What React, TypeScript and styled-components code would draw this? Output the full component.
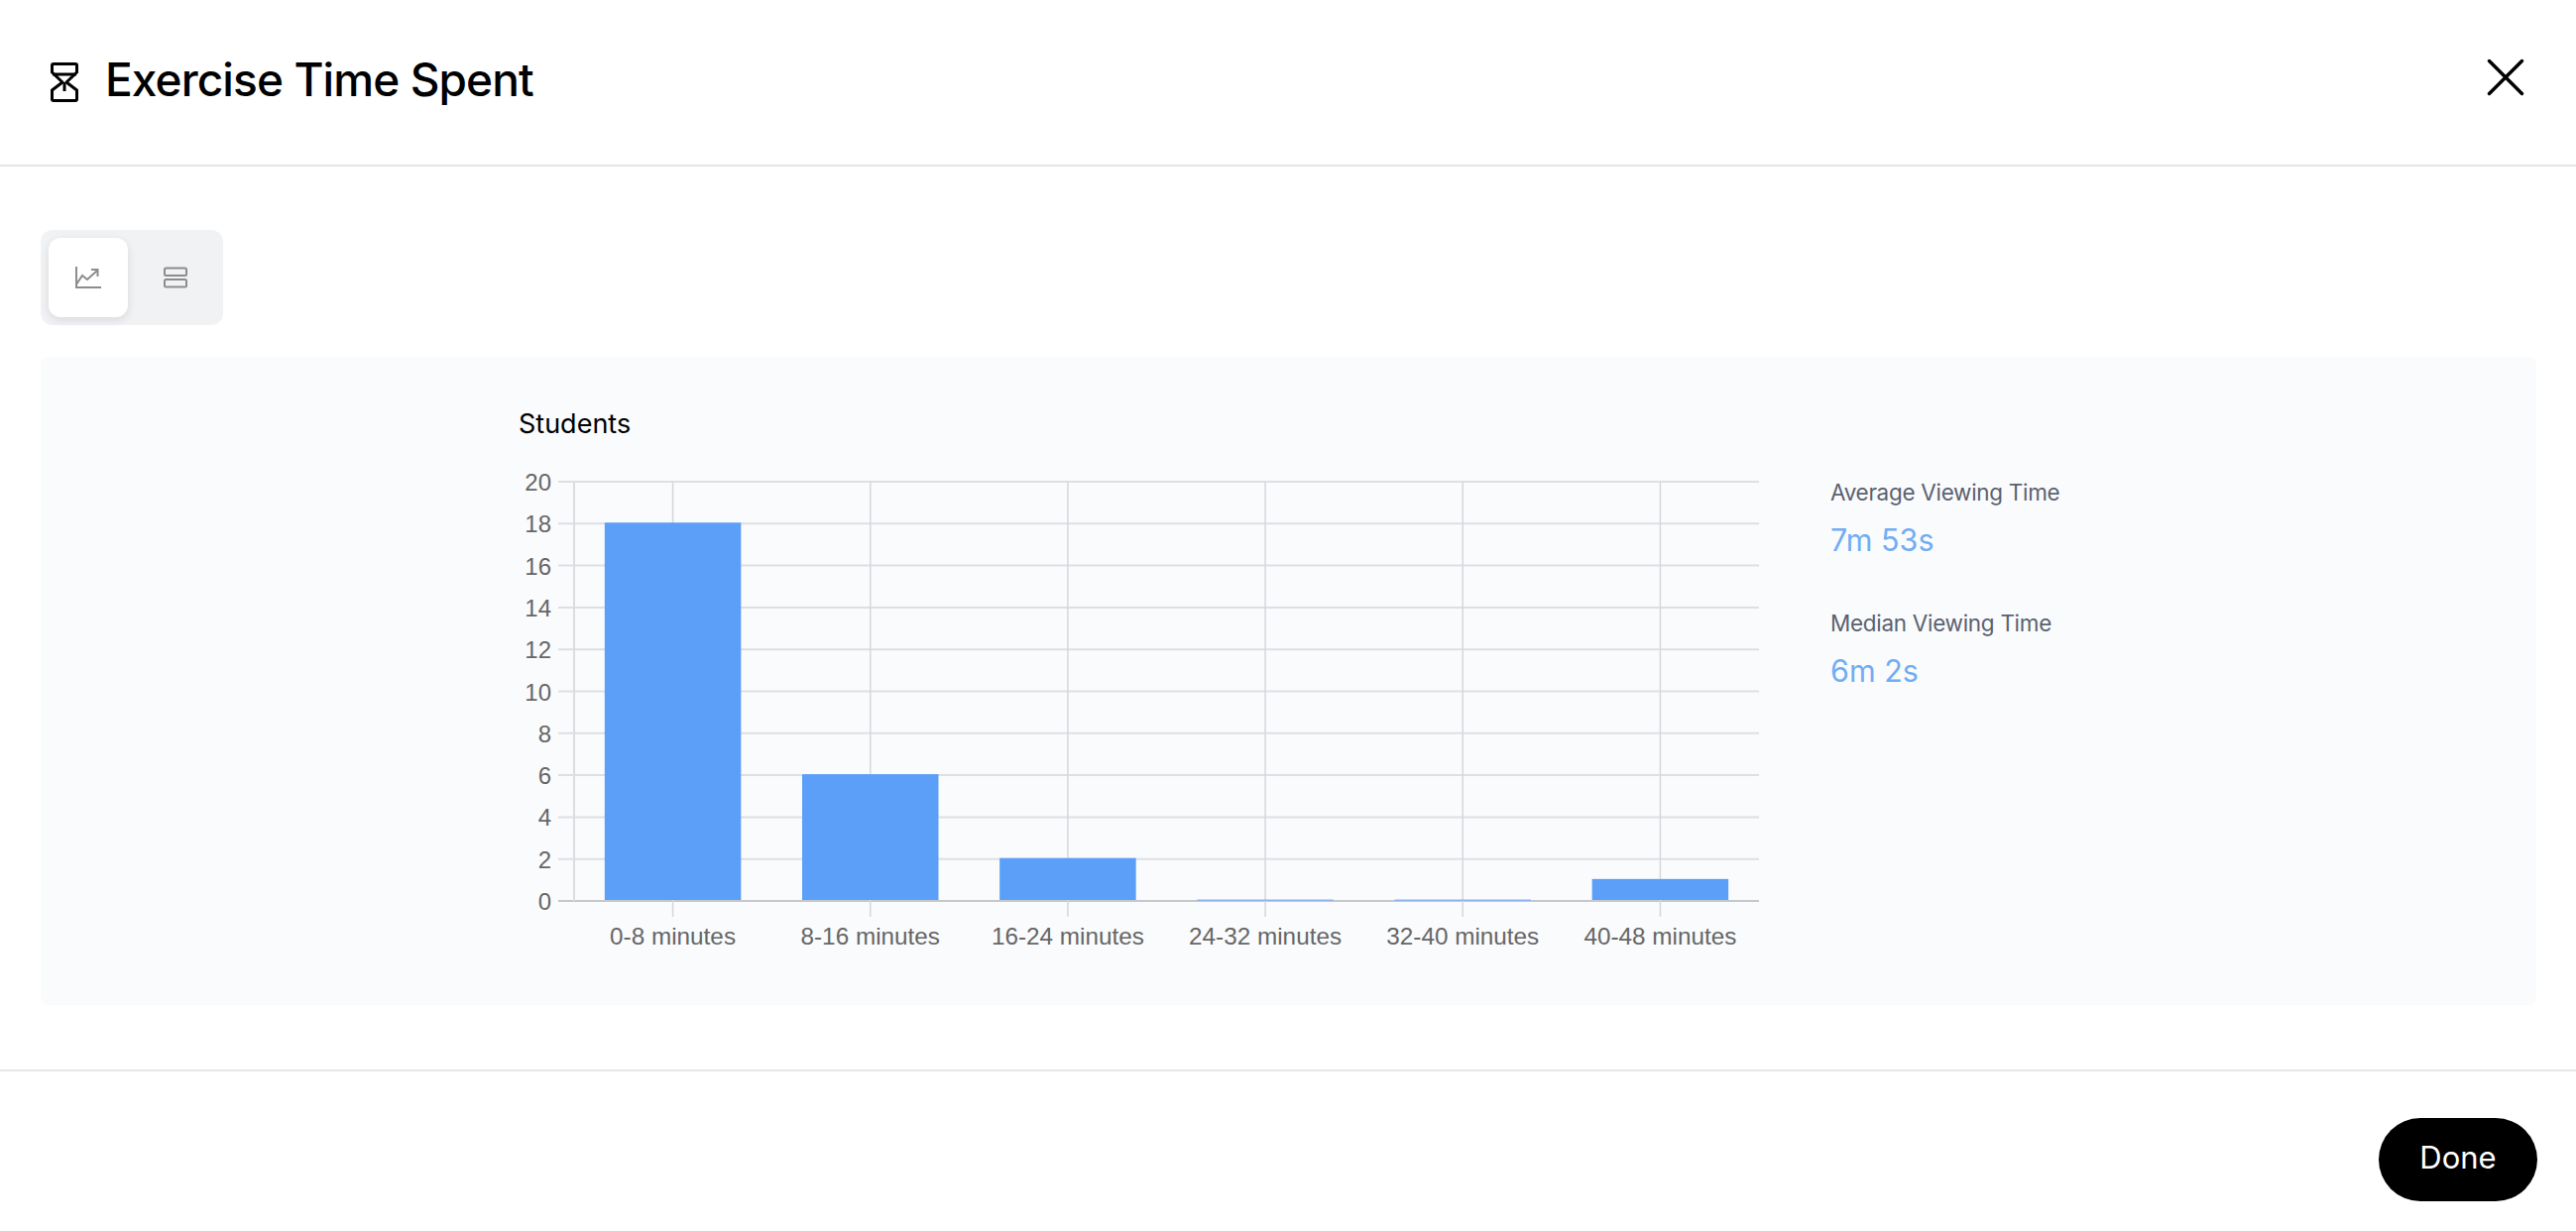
import styled, { createGlobalStyle } from "styled-components";

const GlobalStyle = createGlobalStyle`
  * {
    box-sizing: border-box;
  }
  html, body {
    margin: 0;
    padding: 0;
    background: #ffffff;
    font-family: "Inter", "Liberation Sans", sans-serif;
  }
`;

const Page = styled.div`
  width: 2598px;
  height: 1242px;
  display: flex;
  flex-direction: column;
  background: #ffffff;
  overflow: hidden;
`;

const Header = styled.header`
  height: 168px;
  flex: none;
  padding: 0 51px 0 50px;
  display: flex;
  align-items: center;
  justify-content: space-between;
  border-bottom: 2px solid #e6e6eb;
`;

const TitleGroup = styled.div`
  display: flex;
  align-items: center;
  gap: 26px;
`;

const Title = styled.h1`
  margin: 0 0 6px;
  font-size: 46px;
  line-height: 56px;
  font-weight: 500;
  letter-spacing: -0.9px;
  color: #000000;
`;

const CloseButton = styled.button`
  width: 40px;
  height: 40px;
  padding: 0;
  margin-bottom: 10px;
  border: 0;
  background: none;
  display: flex;
`;

const Main = styled.main`
  flex: 1;
  padding: 64px 40px 65px 41px;
  display: flex;
  flex-direction: column;
  gap: 32px;
`;

const Toggle = styled.div`
  width: 184px;
  height: 96px;
  flex: none;
  padding: 8px;
  display: flex;
  gap: 8px;
  border-radius: 12px;
  background: #f1f2f4;
`;

const ToggleButton = styled.button<{ $active?: boolean }>`
  width: 80px;
  height: 80px;
  padding: 0;
  border: 0;
  border-radius: 12px;
  display: flex;
  align-items: center;
  justify-content: center;
  background: ${(p) => (p.$active ? "#ffffff" : "transparent")};
  box-shadow: ${(p) => (p.$active ? "0 3px 8px rgba(40, 45, 60, 0.12)" : "none")};
`;

const Panel = styled.section`
  flex: 1;
  padding: 50px 0 0 482px;
  display: flex;
  gap: 72px;
  border-radius: 8px;
  background: #fafbfd;
`;

const ChartColumn = styled.div`
  width: 1251px;
  display: flex;
  flex-direction: column;
`;

const ChartTitle = styled.div`
  font-size: 27px;
  line-height: 36px;
  color: #000000;
  margin-bottom: 20px;
`;

const Stats = styled.div`
  padding-top: 72px;
  display: flex;
  flex-direction: column;
  gap: 51px;
`;

const Stat = styled.div`
  display: flex;
  flex-direction: column;
  gap: 15px;
`;

const StatLabel = styled.div`
  font-size: 22.5px;
  line-height: 30px;
  letter-spacing: -0.3px;
  color: #5a6270;
`;

const StatValue = styled.div`
  font-size: 30.5px;
  line-height: 36px;
  color: #72adf4;
`;

const Footer = styled.footer`
  height: 163px;
  flex: none;
  padding: 47px 39px 0 0;
  display: flex;
  justify-content: flex-end;
  align-items: flex-start;
  border-top: 2px solid #e6e6eb;
`;

const DoneButton = styled.button`
  width: 160px;
  height: 84px;
  padding: 0 0 6px;
  border: 0;
  border-radius: 42px;
  background: #000000;
  color: #ffffff;
  font-family: inherit;
  font-size: 31px;
  font-weight: 400;
`;

const HourglassIcon = () => (
  <svg width="30" height="44" viewBox="0 0 30 44" fill="none" stroke="#000" strokeWidth="3" strokeLinejoin="round">
    <path d="M4 3.5h22a1.5 1.5 0 0 1 1.5 1.5v7L17 22l10.5 8v9a1.5 1.5 0 0 1-1.5 1.5H4A1.5 1.5 0 0 1 2.5 39v-9L13 22 2.5 12V5A1.5 1.5 0 0 1 4 3.5z" />
    <path d="M3 14h24M15 22v9" />
  </svg>
);

const CloseIcon = () => (
  <svg width="40" height="40" viewBox="0 0 40 40" fill="none" stroke="#000" strokeWidth="3.4" strokeLinecap="round">
    <path d="M3.5 3.5l33 33M36.5 3.5l-33 33" />
  </svg>
);

const TrendIcon = () => (
  <svg width="28" height="24" viewBox="0 0 28 24" fill="none" stroke="#8c8c8c" strokeWidth="2">
    <path d="M2 1v21h25" />
    <path d="M2 19l6-9 5 4 10-9" />
    <path d="M17 4h6.500v7" />
  </svg>
);

const RowsIcon = () => (
  <svg width="26" height="22" viewBox="0 0 26 22" fill="none" stroke="#8c8c8c" strokeWidth="2">
    <rect x="2" y="1.500" width="22" height="7.500" rx="1.500" />
    <rect x="2" y="13" width="22" height="7.500" rx="1.500" />
  </svg>
);

const categories = [
  { label: "0-8 minutes", value: 18 },
  { label: "8-16 minutes", value: 6 },
  { label: "16-24 minutes", value: 2 },
  { label: "24-32 minutes", value: 0 },
  { label: "32-40 minutes", value: 0 },
  { label: "40-48 minutes", value: 1 },
];

const yTicks = [20, 18, 16, 14, 12, 10, 8, 6, 4, 2, 0];

// chart area in svg units, origin is the top left of the chart column
const LEFT = 56;
const RIGHT = 1251;
const TOP = 20;
const BOTTOM = 443;
const BAND = (RIGHT - LEFT) / categories.length;
const BAR = 137.5;

const yFor = (v: number) => BOTTOM - ((BOTTOM - TOP) * v) / 20;

const BarChart = () => (
  <svg width="1251" height="502" viewBox="0 0 1251 502">
    {yTicks.map((t) => (
      <g key={t}>
        <line x1={40} x2={RIGHT} y1={yFor(t)} y2={yFor(t)} stroke={t === 0 ? "#c6c7ca" : "#dedfe3"} strokeWidth="2" />
        <text x={33} y={yFor(t) + 9} textAnchor="end" fontFamily="Liberation Sans" fontSize="24" fill="#666666">
          {t}
        </text>
      </g>
    ))}
    <line x1={LEFT} x2={LEFT} y1={TOP} y2={BOTTOM} stroke="#dcdde1" strokeWidth="2" />
    {categories.map((c, i) => {
      const mid = LEFT + BAND * (i + 0.5);
      const top = yFor(c.value);
      return (
        <g key={c.label}>
          <line x1={mid} x2={mid} y1={TOP} y2={BOTTOM + 16} stroke="#d6d7db" strokeWidth="1.500" />
          {c.value > 0 ? (
            <rect x={mid - BAR / 2} y={top - 1} width={BAR} height={BOTTOM - top} fill="#5c9ff8" />
          ) : (
            <rect x={mid - BAR / 2} y={BOTTOM - 1.5} width={BAR} height={1.5} fill="#8fb5ea" />
          )}
          <text x={mid} y={BOTTOM + 44} textAnchor="middle" fontFamily="Liberation Sans" fontSize="24.300" fill="#666666">
            {c.label}
          </text>
        </g>
      );
    })}
  </svg>
);

const App = () => {
  return (
    <Page>
      <GlobalStyle />
      <Header>
        <TitleGroup>
          <HourglassIcon />
          <Title>Exercise Time Spent</Title>
        </TitleGroup>
        <CloseButton>
          <CloseIcon />
        </CloseButton>
      </Header>
      <Main>
        <Toggle>
          <ToggleButton $active>
            <TrendIcon />
          </ToggleButton>
          <ToggleButton>
            <RowsIcon />
          </ToggleButton>
        </Toggle>
        <Panel>
          <ChartColumn>
            <ChartTitle>Students</ChartTitle>
            <BarChart />
          </ChartColumn>
          <Stats>
            <Stat>
              <StatLabel>Average Viewing Time</StatLabel>
              <StatValue>7m 53s</StatValue>
            </Stat>
            <Stat>
              <StatLabel>Median Viewing Time</StatLabel>
              <StatValue>6m 2s</StatValue>
            </Stat>
          </Stats>
        </Panel>
      </Main>
      <Footer>
        <DoneButton>Done</DoneButton>
      </Footer>
    </Page>
  );
};

export default App;
